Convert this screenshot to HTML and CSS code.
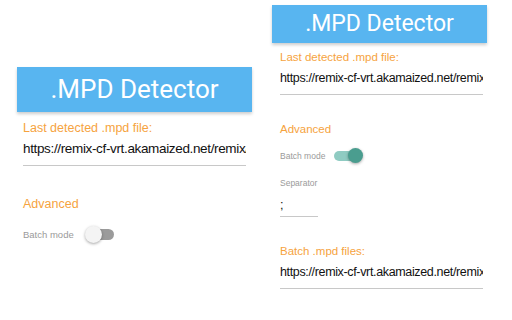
FILE: index.html
```html
<!DOCTYPE html>
<html lang="en">
<head>
    <meta charset="UTF-8">
    <title>.MPD Detector</title>
    <link rel="stylesheet" href="styles.css">
</head>
<body>
    <div class="popup popup-large">
        <div class="header">.MPD Detector</div>
        <div class="content">
            <div class="label">Last detected .mpd file:</div>
            <div class="field">https://remix-cf-vrt.akamaized.net/remix/content/manifest.mpd</div>
            <div class="section">Advanced</div>
            <div class="switch-row">
                <span class="small-label">Batch mode</span>
                <span class="switch"><span class="thumb"></span></span>
            </div>
        </div>
    </div>

    <div class="popup popup-small">
        <div class="header">.MPD Detector</div>
        <div class="content">
            <div class="label">Last detected .mpd file:</div>
            <div class="field">https://remix-cf-vrt.akamaized.net/remix/content/manifest.mpd</div>
            <div class="section">Advanced</div>
            <div class="switch-row">
                <span class="small-label">Batch mode</span>
                <span class="switch on"><span class="thumb"></span></span>
            </div>
            <div class="small-label sep-label">Separator</div>
            <div class="field sep-field">;</div>
            <div class="label batch-label">Batch .mpd files:</div>
            <div class="field">https://remix-cf-vrt.akamaized.net/remix/content/manifest.mpd</div>
        </div>
    </div>
</body>
</html>
```

FILE: styles.css
```css
body {
    margin: 0;
    display: flex;
    align-items: flex-start;
    font-family: "Liberation Sans", Arial, sans-serif;
    background-color: #fff;
}

.header {
    background-color: #58b5f0;
    color: #fff;
    text-align: center;
    box-shadow: 0 2px 3px rgba(0, 0, 0, 0.2);
}

.label, .section {
    color: #f6a33e;
}

.field {
    color: #111;
    white-space: nowrap;
    overflow: hidden;
    border-bottom: 1px solid #c8c8c8;
}

.small-label {
    color: #9a9a9a;
}

.switch-row {
    display: flex;
    align-items: center;
}

.switch {
    position: relative;
    display: inline-block;
    background-color: #9b9b9b;
    border-radius: 6px;
}

.thumb {
    position: absolute;
    left: -3px;
    border-radius: 50%;
    background-color: #f4f4f4;
    box-shadow: 0 1px 3px rgba(0, 0, 0, 0.35);
}

.switch.on {
    background-color: #8fcbc2;
}

.switch.on .thumb {
    left: auto;
    right: -3px;
    background-color: #4a9d8f;
}

/* left screenshot, bigger scale */
.popup-large {
    width: 235px;
    margin: 67px 0 0 17px;
}

.popup-large .header {
    height: 45px;
    line-height: 45px;
    font-family: Roboto, "Liberation Sans", sans-serif;
    font-size: 26px;
}

.popup-large .content {
    padding: 0 6px;
}

.popup-large .label {
    margin-top: 8px;
    font-size: 12.5px;
    line-height: 16px;
}

.popup-large .field {
    padding: 5px 0 8px;
    font-size: 13.5px;
    letter-spacing: -0.35px;
    line-height: 16px;
}

.popup-large .section {
    margin-top: 29px;
    font-size: 12.5px;
    line-height: 18px;
}

.popup-large .switch-row {
    margin-top: 13px;
    height: 16px;
    gap: 14px;
}

.popup-large .small-label {
    font-size: 9.5px;
}

.popup-large .switch {
    width: 26px;
    height: 11px;
}

.popup-large .thumb {
    top: -3px;
    width: 17px;
    height: 17px;
}

/* right screenshot, smaller scale */
.popup-small {
    width: 215px;
    margin: 5px 0 0 20px;
}

.popup-small .header {
    height: 38px;
    line-height: 38px;
    font-family: Roboto, "Liberation Sans", sans-serif;
    font-size: 23px;
}

.popup-small .content {
    padding: 0 4px 0 8px;
}

.popup-small .label {
    margin-top: 7px;
    font-size: 11.5px;
    line-height: 15px;
}

.popup-small .field {
    padding: 5px 0 8px;
    font-size: 12.5px;
    letter-spacing: -0.35px;
    line-height: 16px;
}

.popup-small .section {
    margin-top: 26px;
    font-size: 11.5px;
    line-height: 16px;
}

.popup-small .switch-row {
    margin-top: 12px;
    height: 14px;
    gap: 9px;
}

.popup-small .small-label {
    font-size: 8.5px;
    line-height: 12px;
}

.popup-small .switch {
    width: 26px;
    height: 10px;
}

.popup-small .thumb {
    top: -3px;
    width: 15px;
    height: 15px;
}

.popup-small .sep-label {
    margin-top: 14px;
}

.popup-small .sep-field {
    width: 38px;
    margin-top: 4px;
    padding: 4px 0 3px;
}

.popup-small .batch-label {
    margin-top: 27px;
}
```
